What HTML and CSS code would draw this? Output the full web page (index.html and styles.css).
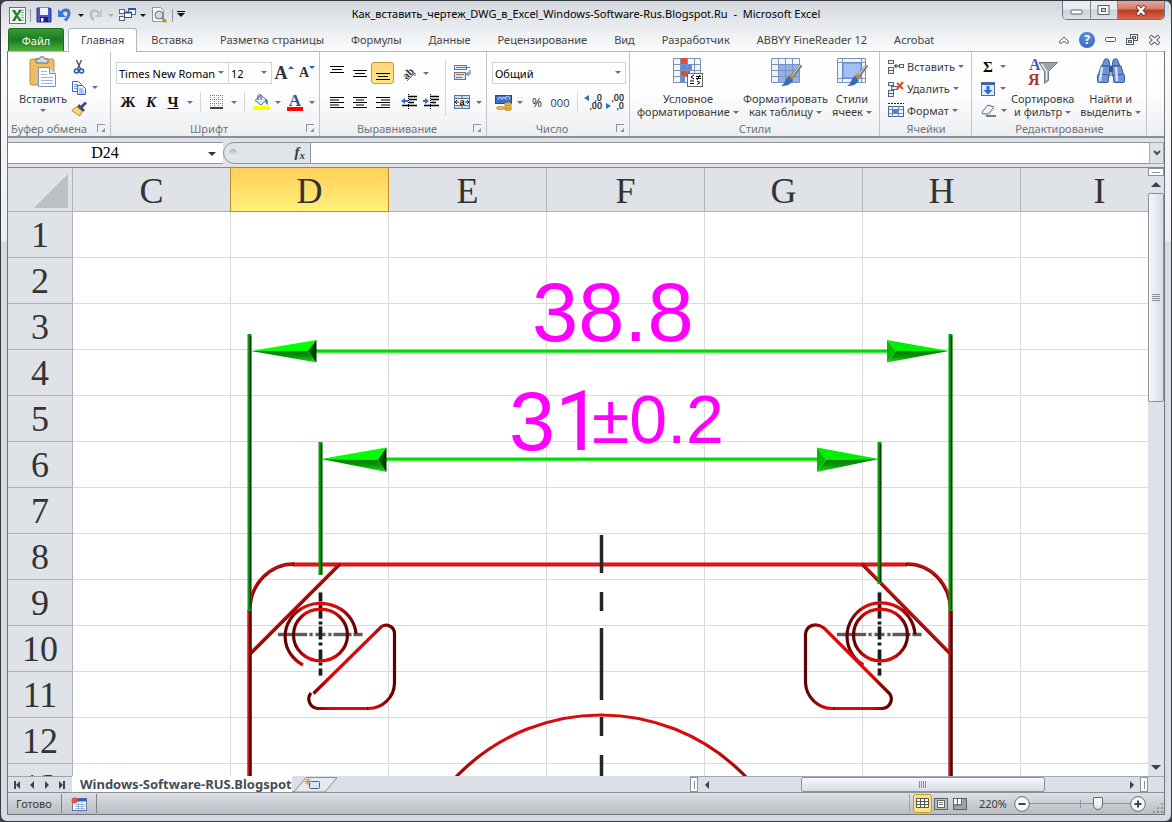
FILE: index.html
```html
<!DOCTYPE html>
<html lang="ru">
<head>
<meta charset="utf-8">
<title>Microsoft Excel</title>
<link rel="stylesheet" href="styles.css">
</head>
<body>
<div class="window">
  <header class="titlebar">
    <div class="qat">
      <svg class="app-logo" width="17" height="17" viewBox="0 0 17 17"><rect x=".5" y=".5" width="16" height="16" fill="#fff" stroke="#3f8f45"/><path d="M9 3h6M9 5.500h6M9 8h6M9 10.500h6M9 13h6" stroke="#79b37c"/><path d="M2 2l10 1v11L2 15z" fill="#e3f3e3"/><path d="M3 3l3 0 2 3.500L10 3h3l-4 5.500L13 14h-3l-2-3.500L6 14H3l3.500-5.500z" fill="#1f7f2b"/></svg>
      <span class="qat-sep"></span>
      <button class="ico w18" aria-label="Сохранить"><svg width="16" height="16" viewBox="0 0 16 16"><path d="M1 1h13l1 1v13H1z" fill="#4a57c8" stroke="#2a338f"/><rect x="4" y="1" width="8" height="7" fill="#eef2fb"/><rect x="4" y="10" width="8" height="5" fill="#1c2266"/><rect x="5" y="11" width="2.500" height="3.500" fill="#fff"/></svg></button>
      <button class="ico w24" aria-label="Отменить"><svg width="16" height="16" viewBox="0 0 16 16"><path d="M4 6c3-4 8-4 8 .5 0 3-2 5-4 7" fill="none" stroke="#3f74d4" stroke-width="3"/><path d="M1 2v8h8z" fill="#3f76da"/></svg></button>
      <button class="ico w11" aria-label="Список отмены"><i class="dn black"></i></button>
      <button class="ico w22" aria-label="Вернуть"><svg width="16" height="16" viewBox="0 0 16 16"><path d="M11 6C8 2 3 3 3 7c0 3 1 5 3 6" fill="none" stroke="#b9bdc3" stroke-width="2.500"/><path d="M14 2v8H7z" fill="#c3c7cc"/></svg></button>
      <button class="ico w11" aria-label="Список возврата"><i class="dn pale"></i></button>
      <button class="ico w24" aria-label="Окна"><svg width="17" height="16" viewBox="0 0 17 16"><g fill="#f3f6fb" stroke="#5b6676"><rect x=".5" y="2.500" width="5" height="4"/><rect x=".5" y="9.500" width="5" height="4"/><rect x="9.500" y="1.500" width="7" height="6"/></g><rect x="5.500" y="5.500" width="7" height="5" fill="#fff" stroke="#2b4f8d"/><path d="M5.500 5.500h7M9.500 2h7" stroke="#2c55a0" stroke-width="2"/></svg></button>
      <button class="ico w11" aria-label="Список окон"><i class="dn black"></i></button>
      <button class="ico w24" aria-label="Предварительный просмотр"><svg width="16" height="16" viewBox="0 0 16 16"><path d="M1.500.5h8l3 3v11h-11z" fill="#fff" stroke="#8b95a5"/><circle cx="8" cy="8" r="4" fill="#bfe1f6" stroke="#58708d"/><path d="M11 11l4 4" stroke="#d1831f" stroke-width="2.500"/></svg></button>
      <span class="qat-sep"></span>
      <button class="ico w11 more" aria-label="Настройка панели"><i class="dn black"></i></button>
    </div>
    <div class="title">Как_вставить_чертеж_DWG_в_Excel_Windows-Software-Rus.Blogspot.Ru&nbsp; -&nbsp; Microsoft Excel</div>
    <div class="controls">
      <button class="ctl" aria-label="Свернуть"><svg width="13" height="10" viewBox="0 0 13 10"><rect x="1" y="5" width="11" height="4" rx="1" fill="#fff" stroke="#5b6068"/></svg></button>
      <button class="ctl" aria-label="Развернуть"><svg width="13" height="10" viewBox="0 0 13 10"><rect x="1" y=".5" width="11" height="9" fill="#fff" stroke="#5b6068"/><rect x="4.500" y="3.500" width="4" height="3" fill="#ccd1d8" stroke="#5b6068"/></svg></button>
      <button class="ctl close" aria-label="Закрыть"><svg width="12" height="11" viewBox="0 0 12 11"><path d="M2 1l8 9M10 1l-8 9" stroke="#5a2a2a" stroke-width="4"/><path d="M2.500 1.500l7 8M9.500 1.500l-7 8" stroke="#fff" stroke-width="2.500"/></svg></button>
    </div>
  </header>

  <nav class="tabs">
    <a class="tab file" href="#">Файл</a>
    <a class="tab active" href="#">Главная</a>
    <a class="tab" href="#">Вставка</a>
    <a class="tab" href="#">Разметка страницы</a>
    <a class="tab" href="#">Формулы</a>
    <a class="tab" href="#">Данные</a>
    <a class="tab" href="#">Рецензирование</a>
    <a class="tab" href="#">Вид</a>
    <a class="tab" href="#">Разработчик</a>
    <a class="tab" href="#">ABBYY FineReader 12</a>
    <a class="tab" href="#">Acrobat</a>
    <div class="doc-controls">
      <button class="ico" aria-label="Свернуть ленту"><svg width="10" height="8" viewBox="0 0 10 8"><path d="M.8 5L5 1l4.200 4v2.200H7.500L5 5 2.500 7.200H.8z" fill="#fff" stroke="#555b63"/></svg></button>
      <button class="help" aria-label="Справка">?</button>
      <button class="ico" aria-label="Свернуть книгу"><svg width="11" height="5" viewBox="0 0 11 5"><rect x=".5" y=".5" width="10" height="4" rx="1" fill="#fff" stroke="#555b63"/></svg></button>
      <button class="ico" aria-label="Восстановить книгу"><svg width="13" height="12" viewBox="0 0 13 12"><rect x="4.500" y=".5" width="7" height="6" fill="#fff" stroke="#555b63"/><rect x="6.500" y="2.500" width="3" height="2" fill="#dde" stroke="#555b63"/><rect x=".5" y="4.500" width="7" height="6" fill="#fff" stroke="#555b63"/><rect x="2.500" y="6.500" width="3" height="2" fill="#dde" stroke="#555b63"/></svg></button>
      <button class="ico" aria-label="Закрыть книгу"><svg width="11" height="10" viewBox="0 0 11 10"><path d="M1 1l9 8M10 1l-9 8" stroke="#555b63" stroke-width="4"/><path d="M1.500 1.500l8 7M9.500 1.500l-8 7" stroke="#fff" stroke-width="2"/></svg></button>
    </div>
  </nav>

  <div class="workspace">
    <div class="ribbon">
      <section class="group g-clip">
        <div class="body">
          <button class="big w56"><svg width="28" height="32" viewBox="0 0 28 32"><rect x="1" y="3" width="24" height="26" rx="2" fill="#ebbd66" stroke="#c48a35"/><path d="M7 3h3c0-3 6-3 6 0h3v4H7z" fill="#d4d7dc" stroke="#6a6f78"/><path d="M9.500 11.500h11l6 6v13h-17z" fill="#fff" stroke="#7e93b5"/><path d="M20.500 11.500v6h6" fill="#dfe8f6" stroke="#7e93b5"/><path d="M12 15.500h6M12 18.500h6M12 21.500h12M12 24.500h12M12 27.500h12" stroke="#9db7dd"/></svg><span>Вставить</span><i class="dn"></i></button>
          <div class="stack">
            <button class="sm" aria-label="Вырезать"><svg width="16" height="16" viewBox="0 0 16 16"><path d="M5.500 1l4 9M10.500 1l-4 9" stroke="#505a66" stroke-width="1.500"/><circle cx="5.500" cy="12" r="2" fill="none" stroke="#2c55b0" stroke-width="1.600"/><circle cx="10.500" cy="12" r="2" fill="none" stroke="#2c55b0" stroke-width="1.600"/></svg></button>
            <button class="sm" aria-label="Копировать"><svg width="16" height="16" viewBox="0 0 16 16"><path d="M1.500 1.500h6l3 3v7h-9z" fill="#fff" stroke="#3c66b5"/><path d="M6.500 5.500h5l3 3v6h-8z" fill="#e8f1fd" stroke="#3c66b5"/><path d="M3 4.500h4M3 6.500h3M3 8.500h3M8 9h4M8 11h5M8 13h5" stroke="#6d95d8"/></svg><i class="dn"></i></button>
            <button class="sm" aria-label="Формат по образцу"><svg width="16" height="16" viewBox="0 0 16 16"><path d="M15 1.500l-5 5" stroke="#344f94" stroke-width="3"/><path d="M8 3l6 6-2 2-6-5z" fill="#4c4c58"/><path d="M5.500 5.500l6 5L8.500 15 .8 9.500z" fill="#f6d67c" stroke="#b78a2c"/></svg></button>
          </div>
        </div>
        <div class="caption"><span>Буфер обмена</span><button class="launch" aria-label="Буфер обмена: параметры"></button></div>
      </section>

      <section class="group g-font">
        <div class="body rows">
          <div class="row">
            <label class="combo c-font"><select aria-label="Шрифт"><option>Times New Roman</option></select></label><label class="combo c-size"><select aria-label="Размер шрифта"><option>12</option></select></label>
            <button class="ico w24 grow" aria-label="Увеличить размер">A<i class="up blue"></i></button>
            <button class="ico w22 grow small" aria-label="Уменьшить размер">A<i class="dn blue"></i></button>
          </div>
          <div class="row">
            <button class="ico w24 fmt">Ж</button>
            <button class="ico w22 fmt it">К</button>
            <button class="ico w22 fmt un">Ч</button>
            <button class="ico w11" aria-label="Виды подчеркивания"><i class="dn"></i></button>
            <span class="vsep"></span>
            <button class="ico w22" aria-label="Границы"><svg width="14" height="14" viewBox="0 0 14 14"><path d="M.5 0v12M4.500 0v12M8.500 0v12M12.500 0v12M0 .5h13M0 4.500h13M0 8.500h13" stroke="#777" stroke-dasharray="1 1"/><path d="M0 13h13" stroke="#000" stroke-width="1.500"/></svg></button>
            <button class="ico w11" aria-label="Виды границ"><i class="dn"></i></button>
            <span class="vsep"></span>
            <button class="ico w22" aria-label="Цвет заливки"><svg width="16" height="16" viewBox="0 0 16 16"><path d="M8 1L2 6.500 8 11l5.500-5z" fill="#dfeaf8" stroke="#4a6fa8"/><path d="M5 6V2c0-2 3-2 3 0v4" fill="none" stroke="#3a4d6a"/><path d="M12 5c3 0 3 3 2.500 6-1.500-1-2-3-2.500-6z" fill="#2f62b8"/><rect y="12" width="16" height="4" fill="#ff0"/></svg></button>
            <button class="ico w11" aria-label="Выбор цвета заливки"><i class="dn"></i></button>
            <button class="ico w22 color" aria-label="Цвет текста"><span>A</span></button>
            <button class="ico w11" aria-label="Выбор цвета текста"><i class="dn"></i></button>
          </div>
        </div>
        <div class="caption"><span>Шрифт</span><button class="launch" aria-label="Шрифт: параметры"></button></div>
      </section>

      <section class="group g-align">
        <div class="body split">
          <div class="rows inner">
            <div class="row">
              <button class="ico w23" aria-label="По верхнему краю"><svg width="16" height="16" viewBox="0 0 16 16"><path d="M1 1.500h14M3 4.500h10M1 7.500h14" stroke="#000" stroke-width="1.200"/></svg></button>
              <button class="ico w23" aria-label="По середине"><svg width="16" height="16" viewBox="0 0 16 16"><path d="M1 5.500h14M3 8.500h10M1 11.500h14" stroke="#000" stroke-width="1.200"/></svg></button>
              <button class="ico w23 on" aria-label="По нижнему краю"><svg width="16" height="16" viewBox="0 0 16 16"><path d="M1 8.500h14M3 11.500h10M1 14.500h14" stroke="#000" stroke-width="1.200"/></svg></button>
              <span class="gap4"></span>
              <button class="ico w22" aria-label="Ориентация"><svg width="18" height="18" viewBox="0 0 18 18"><text x="2" y="13" transform="rotate(-45 8 9)" font-family="Liberation Serif, serif" font-size="11" font-weight="bold" fill="#333">ab</text><path d="M7 17l8-8m0 0h-3m3 0v3" stroke="#666" fill="none"/></svg></button>
              <button class="ico w11" aria-label="Виды ориентации"><i class="dn"></i></button>
            </div>
            <div class="row">
              <button class="ico w23" aria-label="По левому краю"><svg width="16" height="14" viewBox="0 0 16 14"><path d="M1 2.500h14M1 5h9M1 7.500h14M1 10h9M1 12.500h14" stroke="#000" stroke-width="1.200"/></svg></button>
              <button class="ico w23" aria-label="По центру"><svg width="16" height="14" viewBox="0 0 16 14"><path d="M1 2.500h14M4 5h8M1 7.500h14M4 10h8M1 12.500h14" stroke="#000" stroke-width="1.200"/></svg></button>
              <button class="ico w23" aria-label="По правому краю"><svg width="16" height="14" viewBox="0 0 16 14"><path d="M1 2.500h14M6 5h9M1 7.500h14M6 10h9M1 12.500h14" stroke="#000" stroke-width="1.200"/></svg></button>
              <span class="gap4"></span>
              <button class="ico w22" aria-label="Уменьшить отступ"><svg width="17" height="16" viewBox="0 0 17 16"><path d="M7 2.500h9M8 5.500h8M8 8.500h5M1 11.500h15" stroke="#000" stroke-width="1.600"/><path d="M7.500 0v16" stroke="#000" stroke-dasharray="1 1"/><path d="M0 7l4-3v2h3v2H4v2z" fill="#2f6fd0"/></svg></button>
              <button class="ico w22" aria-label="Увеличить отступ"><svg width="17" height="16" viewBox="0 0 17 16"><path d="M7 2.500h9M8 5.500h8M8 8.500h5M1 11.500h15" stroke="#000" stroke-width="1.600"/><path d="M7.500 0v16" stroke="#000" stroke-dasharray="1 1"/><path d="M6 7L2 4v2H0v2h2v2z" fill="#2f6fd0"/></svg></button>
            </div>
          </div>
          <span class="vsep tall"></span>
          <div class="rows inner">
            <div class="row"><button class="ico w22" aria-label="Перенос текста"><svg width="17" height="16" viewBox="0 0 17 16"><rect x=".5" y=".5" width="12" height="4" fill="#e4eefb" stroke="#5c7699"/><path d="M2 2.500h14" stroke="#b5651d"/><path d="M16 5v4h-3m1.500-2l-2 2 2 2" stroke="#2f62b8" fill="none"/><rect x=".5" y="7.500" width="11" height="7" fill="#d6e5f8" stroke="#5c7699"/><path d="M2 9.500h8M2 12.500h6" stroke="#b5651d"/></svg></button></div>
            <div class="row"><button class="ico w22" aria-label="Объединить"><svg width="17" height="16" viewBox="0 0 17 16"><rect x=".5" y="1.500" width="15" height="13" fill="#c9dcf4" stroke="#5c7699"/><path d="M1 4.500h15M1 11.500h15M8 2v2M8 12v2" stroke="#5c7699"/><rect x="1" y="5" width="14" height="6" fill="#fff"/><path d="M1 8h4M15 8h-4M3 6L1 8l2 2M13 6l2 2-2 2" stroke="#222" fill="none"/><text x="5.500" y="10.500" font-family="Liberation Sans, sans-serif" font-size="9" font-weight="bold">a</text></svg></button><button class="ico w11" aria-label="Виды объединения"><i class="dn"></i></button></div>
          </div>
        </div>
        <div class="caption"><span>Выравнивание</span><button class="launch" aria-label="Выравнивание: параметры"></button></div>
      </section>

      <section class="group g-num">
        <div class="body rows">
          <div class="row"><label class="combo c-num"><select aria-label="Числовой формат"><option>Общий</option></select></label></div>
          <div class="row">
            <button class="ico w22" aria-label="Денежный формат"><svg width="17" height="17" viewBox="0 0 17 17"><rect x=".5" y="1.500" width="16" height="8" fill="#3c6fc4" stroke="#264a8c"/><path d="M3 5.500a2 2 0 1 1 4 0a2 2 0 1 1 4 0a2 2 0 1 1 3 0" stroke="#cfe0fa" fill="none"/><g fill="#f2bf45" stroke="#a8741a" stroke-width=".7"><ellipse cx="13" cy="15" rx="3.500" ry="1.500"/><ellipse cx="13" cy="12.500" rx="3.500" ry="1.500"/><ellipse cx="13" cy="10" rx="3.500" ry="1.500"/><ellipse cx="5.500" cy="14" rx="4" ry="1.500"/></g></svg></button>
            <button class="ico w11" aria-label="Виды денежных форматов"><i class="dn"></i></button>
            <button class="ico w22 pct">%</button>
            <button class="ico w24 thou">000</button>
            <span class="vsep"></span>
            <button class="ico w22 dec" aria-label="Увеличить разрядность"><b>,0</b><b>,00</b><i class="lf"></i></button>
            <button class="ico w22 dec" aria-label="Уменьшить разрядность"><b>,00</b><b>,0</b><i class="rt"></i></button>
          </div>
        </div>
        <div class="caption"><span>Число</span><button class="launch" aria-label="Число: параметры"></button></div>
      </section>

      <section class="group g-style">
        <div class="body">
          <button class="big"><svg width="32" height="32" viewBox="0 0 32 32"><path d="M1.500 2.500h27v24h-27z" fill="#f2f6fc" stroke="#7b93b8"/><rect x="8" y="2" width="7" height="6" fill="#e74a33"/><rect x="8" y="8" width="12" height="6" fill="#5d8be6"/><rect x="8" y="14" width="10" height="6" fill="#e74a33"/><rect x="8" y="20" width="5" height="6" fill="#5d8be6"/><path d="M1.500 8.500h27M1.500 14.500h27M1.500 20.500h27M8.500 2v24M15.500 2v24M22.500 2v24" stroke="#7b93b8" fill="none"/><rect x="15.500" y="17.500" width="15" height="13" fill="#fff" stroke="#666"/><path d="M22 19l-3 2 3 2M18 25h4M18 27.500h4M24 20.500h5M24 22.500h5M28 19l-3 5M25 25l3 1.500-3 2" stroke="#000" fill="none"/></svg><span>Условное<br>форматирование<i class="dn"></i></span></button>
          <button class="big"><svg width="32" height="32" viewBox="0 0 32 32"><path d="M1.500 2.500h28v24h-28z" fill="#eef4fc" stroke="#7b93b8"/><rect x="9" y="9" width="20" height="17" fill="#8fb2ef"/><path d="M1.500 8.500h28M1.500 14.500h28M1.500 20.500h28M8.500 2v24M15.500 2v24M22.500 2v24" stroke="#7b93b8" fill="none"/><path d="M31 9L22 21" stroke="#777c85" stroke-width="3.500"/><path d="M31 8L22 20" stroke="#e8eaee" stroke-width="1"/><path d="M23 19l-4 4" stroke="#c58b3a" stroke-width="5"/><path d="M19 20l4 4c-2 5-7 6-12 6 4-2 4-8 8-10z" fill="#3a6bc0"/></svg><span>Форматировать<br>как таблицу<i class="dn"></i></span></button>
          <button class="big"><svg width="32" height="32" viewBox="0 0 32 32"><path d="M1.500 2.500h28v24h-28z" fill="#eef4fc" stroke="#7b93b8"/><path d="M1.500 6.500h28M1.500 22.500h28M6.500 2v24M25.500 2v24" stroke="#7b93b8" fill="none"/><rect x="7" y="7" width="18" height="15" fill="#a3c0f4" stroke="#5d86cf"/><path d="M31 9L22 21" stroke="#777c85" stroke-width="3.500"/><path d="M31 8L22 20" stroke="#e8eaee" stroke-width="1"/><path d="M23 19l-4 4" stroke="#c58b3a" stroke-width="5"/><path d="M19 20l4 4c-2 5-7 6-12 6 4-2 4-8 8-10z" fill="#3a6bc0"/></svg><span>Стили<br>ячеек<i class="dn"></i></span></button>
        </div>
        <div class="caption"><span>Стили</span></div>
      </section>

      <section class="group g-cells">
        <div class="body stack">
          <button class="sm"><svg width="16" height="16" viewBox="0 0 16 16"><g fill="#e9f1fc" stroke="#4e6588"><rect x=".5" y="1.500" width="5" height="3"/><rect x=".5" y="8.500" width="5" height="3"/><rect x=".5" y="11.500" width="5" height="3"/><rect x="11.500" y="5.500" width="4" height="3"/></g><path d="M7 7h4M8.500 5l-2 2 2 2" stroke="#111" fill="none"/></svg><span>Вставить</span><i class="dn"></i></button>
          <button class="sm"><svg width="16" height="16" viewBox="0 0 16 16"><g fill="#e9f1fc" stroke="#4e6588"><rect x=".5" y="1.500" width="5" height="3"/><rect x="3.500" y="5.500" width="6" height="3"/><rect x=".5" y="9.500" width="5" height="3"/><rect x=".5" y="12.500" width="5" height="3"/></g><path d="M9 2l6 6M15 1L9 8" stroke="#e8452c" stroke-width="2"/></svg><span>Удалить</span><i class="dn"></i></button>
          <button class="sm"><svg width="16" height="16" viewBox="0 0 16 16"><path d="M0 1.500h16" stroke="#222" stroke-dasharray="2 1"/><rect x=".5" y="4.500" width="15" height="10" fill="#eef4fd" stroke="#4e6588"/><path d="M.5 7.500h15M.5 11.500h15M4.500 4v11M10.500 4v11" stroke="#6f8bb5"/><rect x="5" y="8" width="5" height="3" fill="#4d84e2"/></svg><span>Формат</span><i class="dn"></i></button>
        </div>
        <div class="caption"><span>Ячейки</span></div>
      </section>

      <section class="group g-edit">
        <div class="body">
          <div class="stack">
            <button class="sm sigma" aria-label="Сумма"><b>Σ</b><i class="dn"></i></button>
            <button class="sm" aria-label="Заполнить"><svg width="14" height="16" viewBox="0 0 14 16"><rect x=".5" y="1.500" width="13" height="13" fill="#dfeafa" stroke="#4c6ba3"/><path d="M1 3h12" stroke="#3565b8" stroke-width="2"/><path d="M5.500 5h3v4h3L7 13.500 2.500 9h3z" fill="#2e6bd6"/></svg><i class="dn"></i></button>
            <button class="sm" aria-label="Очистить"><svg width="15" height="14" viewBox="0 0 15 14"><path d="M1 9l6-7 6 2-6 7H2z" fill="#f5f8fd" stroke="#52657f"/><path d="M7 11l6-7v2l-5 6z" fill="#a9bcd8"/><path d="M5 13h10" stroke="#000"/></svg><i class="dn"></i></button>
          </div>
          <button class="big"><svg width="32" height="32" viewBox="0 0 32 32"><path d="M12 6.500h18.500l-9 9v9l-4 3v-12z" fill="#9fa3aa" stroke="#73777e"/><path d="M14.500 8l5 7v9" stroke="#eceef0" stroke-width="1.500" fill="none"/><text x="2" y="14" font-family="Liberation Serif, serif" font-size="16" font-weight="bold" fill="#3a62b8">А</text><text x="1" y="29" font-family="Liberation Serif, serif" font-size="16" font-weight="bold" fill="#a23a36">Я</text></svg><span>Сортировка<br>и фильтр<i class="dn"></i></span></button>
          <button class="big"><svg width="32" height="32" viewBox="0 0 32 32"><g fill="#6d93d6" stroke="#3a5b9c"><path d="M9 5c0-3 5-3 5 0l1 5h-8zM18 5c0-3 5-3 5 0l2 5h-8z"/><path d="M6 10h9v10H3zM17 10h9l3 10H17z"/><rect x="2.500" y="18.500" width="11" height="8" rx="1"/><rect x="18.500" y="18.500" width="11" height="8" rx="1"/></g><rect x="14" y="10" width="4" height="6" fill="#39548c"/><path d="M7 11l-2 14M21 11l1 14" stroke="#d2e1fa" stroke-width="2.500"/></svg><span>Найти и<br>выделить<i class="dn"></i></span></button>
        </div>
        <div class="caption"><span>Редактирование</span></div>
      </section>
    </div>

    <div class="formula-bar">
      <label class="namebox"><input type="text" value="D24" aria-label="Имя"></label>
      <div class="fx"><i class="knob"></i><button class="fxbtn" aria-label="Вставить функцию"><em>f</em><sub>x</sub></button></div>
      <input class="formula" type="text" aria-label="Строка формул">
      <button class="expand" aria-label="Развернуть строку формул"><svg width="8" height="6" viewBox="0 0 8 6"><path d="M1 1l3 3 3-3" stroke="#4a4f56" stroke-width="2" fill="none"/></svg></button>
    </div>

    <main class="sheet-area">
      <div class="sheet">
        <table>
          <thead><tr><th class="corner"><i></i></th><th>C</th><th class="sel">D</th><th>E</th><th>F</th><th>G</th><th>H</th><th>I</th></tr></thead>
          <tbody>
            <tr><th>1</th><td></td><td></td><td></td><td></td><td></td><td></td><td></td></tr>
            <tr><th>2</th><td></td><td></td><td></td><td></td><td></td><td></td><td></td></tr>
            <tr><th>3</th><td></td><td></td><td></td><td></td><td></td><td></td><td></td></tr>
            <tr><th>4</th><td></td><td></td><td></td><td></td><td></td><td></td><td></td></tr>
            <tr><th>5</th><td></td><td></td><td></td><td></td><td></td><td></td><td></td></tr>
            <tr><th>6</th><td></td><td></td><td></td><td></td><td></td><td></td><td></td></tr>
            <tr><th>7</th><td></td><td></td><td></td><td></td><td></td><td></td><td></td></tr>
            <tr><th>8</th><td></td><td></td><td></td><td></td><td></td><td></td><td></td></tr>
            <tr><th>9</th><td></td><td></td><td></td><td></td><td></td><td></td><td></td></tr>
            <tr><th>10</th><td></td><td></td><td></td><td></td><td></td><td></td><td></td></tr>
            <tr><th>11</th><td></td><td></td><td></td><td></td><td></td><td></td><td></td></tr>
            <tr><th>12</th><td></td><td></td><td></td><td></td><td></td><td></td><td></td></tr>
            <tr><th>13</th><td></td><td></td><td></td><td></td><td></td><td></td><td></td></tr>
          </tbody>
        </table>
        <svg class="drawing" width="1140" height="608" viewBox="8 168 1140 608">
          <defs>
            <linearGradient id="tube"><stop offset="0" stop-color="#5a0000"/><stop offset=".25" stop-color="#d80a0a"/><stop offset=".75" stop-color="#d80a0a"/><stop offset="1" stop-color="#5a0000"/></linearGradient>
            <linearGradient id="under" x1="0" y1="0" x2="0" y2="1"><stop offset="0" stop-color="#007a00"/><stop offset=".5" stop-color="#0a9a0a"/><stop offset="1" stop-color="#20e020"/></linearGradient>
            <linearGradient id="back" x1="0" y1="0" x2="1" y2="0"><stop offset="0" stop-color="#008a00"/><stop offset="1" stop-color="#002400"/></linearGradient>
            <g id="cross">
              <path d="M-43 0h30M-11 0h4M-5 0h10M7 0h4M13 0h18M33 0h9M0-43v10M0-31v2M0-29v14M0-13v3M0-8v13M0 8v3M0 15v11M0 28v3M0 34v8" stroke="#ddd" stroke-width="5"/>
              <path d="M-42.500 0h29M-11 0h3M-5 0h10M8 0h3M13 0h18M33 0h9" stroke="#5c5c5c" stroke-width="3"/>
              <path d="M0-42v9M0-31v15M0-13v3M0-8v13M0 8v3M0 15v11M0 28v3M0 34v7" stroke="#1c1c1c" stroke-width="3.500"/>
            </g>
          </defs>
          <use href="#cross" x="320.500" y="634.500"/><use href="#cross" x="879.500" y="634.500"/>
          <g fill="none">
            <path d="M293 564.500H907" stroke="#c41010" stroke-width="4"/><path d="M293 564.500H907" stroke="#f01414" stroke-width="2"/>
            <g stroke="#8a0505" stroke-width="3.400">
              <path d="M250 610c0-26 20-46 44-46M907 564c24 0 43 20 43.500 46"/>
              <path d="M250 654l90-90M862 564l88.500 90"/>
              <path d="M249.500 610v166M950.500 610v166" stroke="#6b0000" stroke-width="4"/>
            </g>
            <g stroke="#d81010" stroke-width="1.500">
              <path d="M250 606c0-24 20-42 44-42M907 563.500c24 0 43 20 43 42"/>
              <path d="M249.500 653l90-90M862.500 564l88 89"/>
              <path d="M248.500 610v166M949.500 610v166"/>
            </g>
            <path d="M251 610v166M952 610v166" stroke="#2a0000"/>
            <g stroke="url(#tube)" stroke-width="3.200">
              <ellipse cx="320.500" cy="635" rx="27" ry="25.800"/>
              <path d="M356 633.500a35.500 33 0 1 0-53 31.500"/>
              <ellipse cx="880.500" cy="635" rx="27" ry="25.800"/>
              <path d="M915 634.500a34 33.500 0 1 0-51.500 30.500"/>
              <path d="M313.500 693.500l68-67a8.500 8.500 0 0 1 13 7v49.500a26 26 0 0 1-27 25.500h-50a9.500 9.500 0 0 1-6.500-15.500"/>
              <path d="M805.500 634c1-9 11-12 18.500-6l65.500 65.500a9.500 9.500 0 0 1-7 15h-49a27 27 0 0 1-28-26z"/>
              <circle cx="601" cy="915.500" r="200.500"/>
            </g>
            <path d="M293.500 563v3M906.500 563v3M317.500 707v3M367.500 707v3M834 707v3M882.500 707v3" stroke="#500000"/>
            <path d="M601.500 535v38M601.500 592v19M601.500 628v72M601.500 717v19M601.500 755v21" stroke="#262626" stroke-width="3.500"/>
          </g>
          <g fill="none">
            <path d="M249.500 334v277M950.500 334v277M320.500 442v133M879.500 442v142" stroke="#0b9a0b" stroke-width="4"/>
            <path d="M250.500 336v273M951.500 336v273M321.500 444v130M880.500 444v138" stroke="#003c00" stroke-width="1.500"/>
            <path d="M316 351.500h572M386 459.500h432" stroke="#5cf05c" stroke-width="4"/><path d="M316 351h572M386 459h432" stroke="#00dc00" stroke-width="2.500"/>
          </g>
          <g><path d="M251 351l65.500-11-9 11z" fill="#0f0"/><path d="M251 351h56.500l9 11.500z" fill="url(#under)"/><path d="M316.500 340v22.500l-9-11.500z" fill="url(#back)"/></g>
          <g><path d="M321 459l65.500-11.500-9 12.500z" fill="#0f0"/><path d="M321 459l56.500 1 9 12z" fill="url(#under)"/><path d="M386.500 447.500V472l-9-12z" fill="url(#back)"/></g>
          <g><path d="M949 351l-62-11 9 11z" fill="#0e0"/><path d="M949 351h-53l-9 11.500z" fill="url(#under)"/><path d="M887 340v22.500l9-11.500z" fill="#0b0"/></g>
          <g><path d="M879 459l-62-11.500 9 12.500z" fill="#0e0"/><path d="M879 459l-53 1-9 12z" fill="url(#under)"/><path d="M817 447.500V472l9-12z" fill="#0b0"/></g>
          <g class="dims"><text x="532" y="341">38.8</text><text x="509" y="450">3<tspan class="one">1</tspan></text><text class="tol" x="592" y="443">±0.2</text></g>
        </svg>
      </div>
      <div class="vscroll">
        <i class="splitter"></i>
        <button aria-label="Вверх"><i class="up dark"></i></button>
        <div class="vtrack"><div class="vthumb"></div></div>
        <button aria-label="Вниз"><i class="dn dark"></i></button>
      </div>
    </main>

    <div class="sheetbar">
      <div class="sheetnav">
        <button aria-label="Первый лист"><i class="bar"></i><i class="lt"></i></button><button aria-label="Предыдущий лист"><i class="lt"></i></button><button aria-label="Следующий лист"><i class="gt"></i></button><button aria-label="Последний лист"><i class="gt"></i><i class="bar"></i></button>
      </div>
      <a class="sheet-tab" href="#">Windows-Software-RUS.Blogspot</a>
      <button class="newtab" aria-label="Вставить лист"><svg width="46" height="15" viewBox="0 0 46 15"><path d="M0 15h2L14 .5h31L33 15z" fill="#e6e9ee" stroke="#8b919b"/><rect x="17.500" y="4.500" width="10" height="7" rx="1" fill="#d9e6fa" stroke="#49618b"/><path d="M16 1v7M12.500 4.500h7M13.500 2l5 5M18.500 2l-5 5" stroke="#d58a1c"/></svg></button>
      <div class="hscroll">
        <i class="hsplit"></i>
        <button aria-label="Влево"><i class="lt dark"></i></button>
        <div class="htrack"><div class="hthumb"></div></div>
        <button aria-label="Вправо"><i class="gt dark"></i></button>
        <i class="hsplit"></i>
      </div>
    </div>

    <footer class="status">
      <span class="ready">Готово</span>
      <button class="ico macro" aria-label="Запись макроса"><svg width="16" height="14" viewBox="0 0 16 14"><rect x="1.500" y="1.500" width="14" height="12" fill="#fff" stroke="#5a78ad"/><path d="M2 3h13" stroke="#2d5fc8" stroke-width="3"/><path d="M4 7.500h10M4 9.500h10M4 11.500h10M7.500 5v8M11 5v8" stroke="#9db4da"/><circle cx="3.500" cy="3.500" r="3" fill="#e2553a"/></svg></button>
      <div class="views">
        <button class="view on" aria-label="Обычный"><svg width="13" height="11" viewBox="0 0 13 11"><path d="M.5.5h12v9H.5zM.5 3.500h12M.5 6.500h12M4.500 0v10M8.500 0v10" fill="#fff" stroke="#575757"/></svg></button>
        <button class="view" aria-label="Разметка"><svg width="14" height="12" viewBox="0 0 14 12"><rect x=".5" y=".5" width="13" height="11" fill="#b9bcc1" stroke="#606469"/><rect x="3.500" y="2.500" width="7" height="7" fill="#fff" stroke="#606469"/><path d="M5 4.500h4M5 6.500h4" stroke="#777"/></svg></button>
        <button class="view" aria-label="Страничный"><svg width="14" height="12" viewBox="0 0 14 12"><rect x=".5" y=".5" width="13" height="11" fill="#9fa3a8" stroke="#606469"/><path d="M1 1h3v5H1zM5 1h3v5H5z" fill="#fff"/><path d="M4.500 1v6M8.500 1v6H1" stroke="#606469" fill="none"/></svg></button>
      </div>
      <span class="pct-label">220%</span>
      <button class="zoom-btn" aria-label="Уменьшить"><svg width="16" height="16" viewBox="0 0 16 16"><circle cx="8" cy="8" r="7.300" fill="#f7f8fa" stroke="#666b72"/><path d="M4.500 8h7" stroke="#444" stroke-width="2"/></svg></button>
      <input class="zoom" type="range" min="0" max="100" value="70" aria-label="Масштаб">
      <button class="zoom-btn" aria-label="Увеличить"><svg width="16" height="16" viewBox="0 0 16 16"><circle cx="8" cy="8" r="7.300" fill="#f7f8fa" stroke="#666b72"/><path d="M4.500 8h7M8 4.500v7" stroke="#444" stroke-width="2"/></svg></button>
      <i class="grip"></i>
    </footer>
  </div>
</div>
</body>
</html>
```
FILE: styles.css
```css
* { box-sizing: border-box; }
body { margin: 0; background: #3a3f45; font: 11px/13px "Noto Sans", "Open Sans", sans-serif; color: #3b3b3b; }
button { font: inherit; color: inherit; background: none; border: 0; padding: 0; margin: 0; }
a { color: inherit; text-decoration: none; }
svg { display: block; flex: none; }
i { font-style: normal; }
input, select { font: inherit; }

.window { height: 100vh; display: flex; flex-direction: column; padding: 0 6px 6px; border: 1px solid #35383d; border-radius: 7px; overflow: hidden; background: linear-gradient(#d3d8de 0, #e9ecef 26px, #fafbfc 50px, #eceef1 240px, #d6dbe2 241px); }
.titlebar { height: 27px; flex: none; display: grid; grid-template-columns: 1fr auto 1fr; }
.title { padding-top: 6px; color: #000; white-space: pre; }

.qat { display: flex; align-items: center; padding: 1px 0 0 2px; }
.app-logo { margin-right: 3px; }
.qat-sep { width: 1px; height: 13px; background: #8d939b; margin: 0 4px 0 1px; }
.ico { display: inline-flex; align-items: center; justify-content: center; height: 22px; flex: none; position: relative; }
.w11 { width: 12px; } .w18 { width: 18px; } .w22 { width: 22px; } .w23 { width: 23px; } .w24 { width: 24px; } .w56 { width: 56px; }
.qat .w11 { width: 8px; }
.gap4 { width: 4px; }
.more .dn { border-width: 4px 4px 0; }
.more::before { content: ""; position: absolute; top: 7px; left: 0; width: 8px; height: 1px; background: #000; }

.dn, .up, .lt, .gt { display: inline-block; width: 0; height: 0; flex: none; border: 3px solid transparent; border-bottom-width: 0; border-top-color: #6a6f77; }
.up { border-bottom-width: 3px; border-top-width: 0; border-bottom-color: #6a6f77; }
.black { border-top-color: #111; }
.pale { border-top-color: #a8adb4; }
.up.dark { border-width: 0 5px 5px; border-bottom-color: #3c4046; }
.dn.dark { border-width: 5px 5px 0; border-top-color: #3c4046; }
.lt { border-width: 4px 4px 4px 0; border-color: transparent #3c4350; }
.gt { border-width: 4px 0 4px 4px; border-color: transparent #3c4350; }

.controls { display: flex; justify-self: end; height: 19px; width: 103px; border: 1px solid #70757d; border-top: 0; border-radius: 0 0 5px 5px; overflow: hidden; }
.ctl { flex: 1; display: flex; align-items: center; justify-content: center; border-right: 1px solid #82878f; background: linear-gradient(#e8ebef 45%, #ccd1d8 50%, #dfe3e8); }
.close { flex: 0 0 46px; border: 0; background: linear-gradient(#e5a89c, #d67a68 45%, #b93a22 50%, #d5694f); }

.tabs { height: 23px; flex: none; display: flex; padding-left: 1px; }
.tab { padding: 5px 13px 0 14px; white-space: nowrap; color: #454545; }
.tab.file { width: 56px; padding: 5px 0 0; margin-right: 4px; text-align: center; color: #fff; border: 1px solid #1c6a22; border-bottom: 0; border-radius: 3px 3px 0 0; background: linear-gradient(#3a9a35, #1b7a22 50%, #52b03c); }
.tab.active { height: 24px; padding: 4px 12px 0; border: 1px solid #b2b6bc; border-bottom: 0; border-radius: 3px 3px 0 0; background: #fff; position: relative; z-index: 1; }
.doc-controls { margin-left: auto; display: flex; align-items: center; gap: 10px; padding-right: 5px; }
.help { width: 16px; height: 16px; border-radius: 50%; background: radial-gradient(circle at 50% 30%, #5d92e0, #2e62b8); color: #fff; font-weight: 700; font-size: 12px; }

.workspace { flex: 1; min-height: 0; display: flex; flex-direction: column; border: 1px solid #71767e; border-top: 0; background: #dfe2e7; }
.ribbon { flex: none; height: 87px; display: flex; border-top: 1px solid #b2b6bc; border-bottom: 2px solid #8b9097; background: linear-gradient(#fff, #fdfdfe 50%, #eceef1); }
.group { flex: none; display: flex; flex-direction: column; border-right: 1px solid #bfc4ca; margin-right: 1px; }
.g-clip { width: 103px; } .g-font { width: 208px; } .g-align { width: 166px; } .g-num { width: 142px; }
.g-style { width: 249px; } .g-cells { width: 91px; } .g-edit { width: 174px; }
.body { display: flex; height: 69px; padding: 4px 0 0 7px; }
.rows { flex-direction: column; gap: 7px; padding: 10px 0 0 4px; }
.body.split { padding: 0 0 0 4px; }
.inner { display: flex; padding-left: 0; }
.row { display: flex; align-items: center; height: 22px; }
.stack { display: flex; flex-direction: column; }
.caption { height: 16px; display: flex; align-items: center; color: #70757d; white-space: nowrap; }
.caption span { flex: 1; text-align: center; }
.g-clip .caption span { padding-left: 3px; text-align: left; }
.launch { width: 8px; height: 8px; margin-right: 5px; border-top: 1px solid #8f949c; border-left: 1px solid #8f949c; position: relative; }
.launch::after { content: ""; position: absolute; right: 0; bottom: 0; border: 2px solid #8f949c; border-top-color: transparent; border-left-color: transparent; }

.big { display: flex; flex-direction: column; align-items: center; line-height: 13px; }
.big span { margin-top: 4px; white-space: nowrap; }
.big .dn { margin-left: 3px; vertical-align: 2px; }
.big > .dn { margin: 4px 0 0; }
.sm { display: flex; align-items: center; gap: 5px; height: 22px; white-space: nowrap; }
.g-clip .sm { height: 21px; }
.g-style .body { padding-left: 6px; gap: 4px; }
.g-cells .body { padding-left: 7px; }
.g-cells .sm { gap: 3px; }
.g-edit .body { padding-left: 8px; }
.g-edit .big { margin-left: 4px; }
.g-edit .big + .big { margin-left: 6px; }
.sigma b { width: 14px; font: 700 15px/20px "Liberation Serif", serif; color: #000; }

.combo { position: relative; height: 22px; border: 1px solid #d1d4d9; background: #fff; }
.combo select { appearance: none; width: 100%; height: 20px; padding: 0 2px; border: 0; background: none; color: #000; }
.combo::after { content: ""; position: absolute; right: 4px; top: 8px; border: 3px solid transparent; border-bottom: 0; border-top-color: #6a6f77; }
.c-font { width: 113px; } .c-size { width: 43px; border-left: 0; } .c-num { width: 134px; }

.grow { font: 700 18px/20px "Liberation Serif", serif; color: #333; }
.grow.small { font-size: 14px; }
.grow i { align-self: flex-start; margin-top: 4px; }
.grow .up { border-bottom-color: #2f5fb5; }
.grow .dn { border-top-color: #2f5fb5; }
.fmt { font: 700 15px/18px "Liberation Serif", serif; color: #111; }
.it { font-style: italic; }
.un { text-decoration: underline; }
.vsep { width: 1px; height: 20px; margin: 0 5px; background: #d3d6db; }
.g-font .vsep { margin: 0 5px 0 4px; }
.vsep.tall { height: 56px; margin: 8px 5px 0 3px; }
.color span { width: 16px; height: 17px; border-bottom: 4px solid #f00; font: 700 17px/13px "Liberation Serif", serif; color: #2d4f96; text-align: center; }
.on { border: 1px solid #c29a3a; border-radius: 3px; background: linear-gradient(#fdd779, #ffe588); }
.pct { font-size: 12px; }
.thou { font: 12px/13px "Open Sans", sans-serif; font-size: 11px; }
.dec { flex-direction: column; align-items: flex-end; padding-right: 3px; font: 9px/8px Roboto, sans-serif; color: #222; }
.dec b { font-weight: 500; }
.lf, .rt { position: absolute; left: 1px; top: 4px; border: 3px solid transparent; border-left: 0; border-right: 5px solid #2f6fd0; }
.rt { top: 12px; border-right: 0; border-left: 5px solid #2f6fd0; }

.formula-bar { flex: none; height: 30px; display: flex; padding: 4px 0; border-bottom: 1px solid #83888f; background: #dfe2e7; }
.formula-bar > * { border: 0 solid #8f959d; border-width: 1px 0; height: 22px; }
.namebox { width: 215px; background: #fff; position: relative; }
.namebox input { width: 194px; height: 20px; padding: 0; border: 0; background: none; text-align: center; font: 16px/20px "Liberation Serif", serif; color: #000; }
.namebox::after { content: ""; position: absolute; right: 7px; top: 9px; border: 4px solid transparent; border-bottom: 0; border-top-color: #333; }
.fx { width: 88px; border-width: 1px; display: flex; align-items: center; justify-content: space-between; padding: 0 5px; border-radius: 11px 0 0 11px; background: #e1e4e9; }
.knob { width: 8px; height: 8px; border-radius: 50%; background: linear-gradient(#aeb3ba, #f3f4f6); }
.fxbtn { font: 700 15px/18px "Liberation Serif", serif; }
.fxbtn sub { font-size: 11px; font-style: italic; vertical-align: -2px; }
.formula-bar .formula { flex: 1; min-width: 0; background: #fff; padding: 0 6px; }
.formula-bar .expand { width: 15px; border: 1px solid #a4a9b0; display: flex; align-items: center; justify-content: center; }

.sheet-area { flex: 1; min-height: 0; display: flex; }
.sheet { flex: 1; min-width: 0; position: relative; overflow: hidden; background: #fff; }
table { width: 1171px; table-layout: fixed; border-collapse: separate; border-spacing: 0; font-family: "Liberation Serif", serif; }
th, td { height: 46px; padding: 0; border: 0 solid #dadada; border-width: 0 1px 1px 0; }
th { font-weight: 400; font-size: 36px; line-height: 40px; color: #333; background: #dfe2e7; border-color: #afb3b8; }
thead th { height: 44px; width: 158px; padding-top: 2px; }
thead .corner { width: 65px; vertical-align: bottom; }
.corner i { display: block; width: 34px; height: 34px; margin: 0 4px 3px auto; background: #bdc1c6; clip-path: polygon(100% 0, 100% 100%, 0 100%); }
.sel { border-color: #c08c2c; background: linear-gradient(#ffcf5a, #fff07a); box-shadow: -1px 0 #c08c2c; position: relative; }
.drawing { position: absolute; left: 0; top: 0; }
.dims { font: 83px "Liberation Sans", Arial, sans-serif; fill: #f0f; }
.one { font-family: Roboto, sans-serif; }
.tol { font-size: 68px; }

.vscroll { width: 16px; flex: none; display: flex; flex-direction: column; background: #dde1e9; }
.vscroll button { height: 17px; display: flex; align-items: center; justify-content: center; }
.splitter { height: 8px; border: 1px solid #8d9299; background: linear-gradient(#8d9299, #8d9299) center / 8px 1px no-repeat #fff; }
.vtrack { flex: 1; }
.vthumb { height: 37%; border: 1px solid #8b929c; border-radius: 2px; background: repeating-linear-gradient(#8b919a 0 1px, transparent 1px 2px) center / 8px 7px no-repeat, linear-gradient(90deg, #f6f7fa, #d8dce6); }

.sheetbar { flex: none; height: 17px; display: flex; border-bottom: 1px solid #8b9097; background: #dbdfe7; }
.sheetnav { width: 64px; display: flex; padding-left: 1px; border-top: 1px solid #9da2aa; }
.sheetnav button { width: 15px; display: flex; align-items: center; justify-content: center; }
.bar { width: 2px; height: 8px; background: #3c4350; }
.sheet-tab { padding: 0 0 0 8px; background: #fff; font: 700 13px/16px "Noto Sans", sans-serif; color: #444c58; white-space: nowrap; }
.newtab { width: 46px; }
.hscroll { flex: 0 0 41%; margin-left: auto; display: flex; padding-right: 16px; border-top: 1px solid #a4a9b1; }
.hsplit { width: 8px; height: 15px; border: 1px solid #8d9299; background: linear-gradient(#8d9299, #8d9299) center / 1px 8px no-repeat #fff; }
.hscroll button { width: 17px; display: flex; align-items: center; justify-content: center; }
.htrack { flex: 1; display: flex; }
.hthumb { width: 60%; margin-left: 21%; height: 15px; border: 1px solid #8b929c; border-radius: 2px; background: repeating-linear-gradient(90deg, #8b919a 0 1px, transparent 1px 2px) center / 8px 7px no-repeat, linear-gradient(#f6f7fa, #d8dce6); }

.status { flex: none; height: 21px; display: flex; align-items: center; background: linear-gradient(#dcdfe3, #b9bdc3); }
.ready { padding: 0 9px 0 8px; line-height: 19px; border-right: 1px solid #7e838b; }
.macro { width: 35px; height: 19px; border-right: 1px solid #7e838b; }
.views { margin-left: auto; display: flex; border-left: 1px solid #a0a4ab; padding-left: 3px; }
.view { width: 19px; height: 19px; display: flex; align-items: center; justify-content: center; border: 1px solid transparent; }
.view.on { border-color: #c29a3a; background: #ffe27a; }
.pct-label { margin: 0 7px 0 9px; }
.zoom-btn { width: 16px; }
.zoom { appearance: none; width: 100px; height: 16px; margin: 0; background: linear-gradient(#8796a8, #8796a8) center / 100% 1px no-repeat, linear-gradient(#8796a8, #8796a8) center / 1px 8px no-repeat; }
.zoom::-webkit-slider-thumb { appearance: none; width: 10px; height: 13px; background: linear-gradient(#fff, #dfe2e6); border: 1px solid #666b72; border-radius: 1px 1px 5px 5px; }
.grip { width: 11px; height: 11px; margin: 8px 1px 0 6px; background: radial-gradient(#8e939a 1px, transparent 1px) 0 0 / 4px 4px; clip-path: polygon(100% 0, 100% 100%, 0 100%); }
```
